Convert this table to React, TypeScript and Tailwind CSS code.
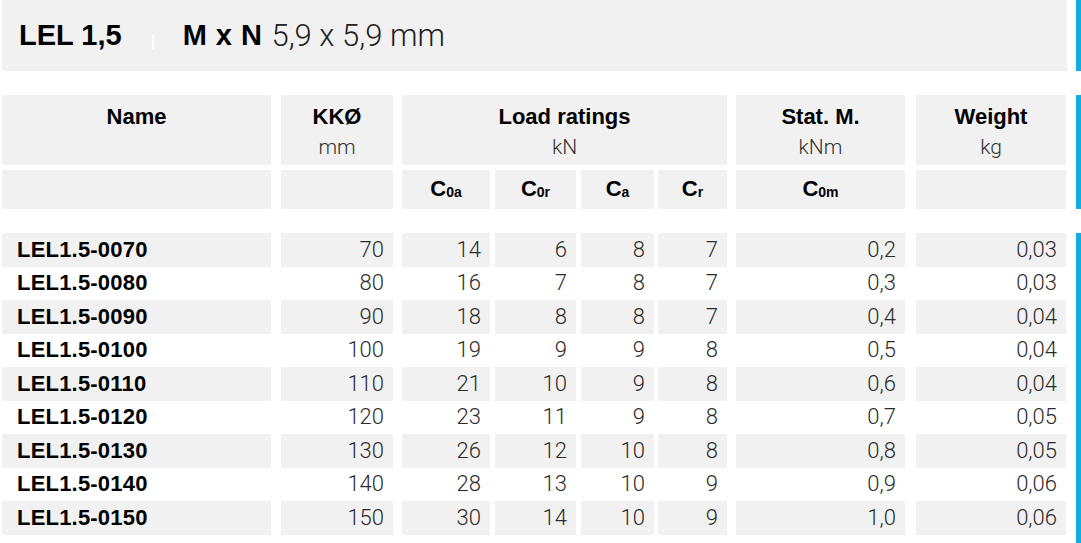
import React from 'react'

/* Spaltenraster: Breite + Abstand links (aus dem Screenshot gemessen) */
const cols = [
  { w: 'w-[269px]', ml: 'ml-[2px]' },
  { w: 'w-[112px]', ml: 'ml-[10px]' },
  { w: 'w-[88px]', ml: 'ml-[9px]' },
  { w: 'w-[81px]', ml: 'ml-[5px]' },
  { w: 'w-[73px]', ml: 'ml-[5px]' },
  { w: 'w-[69px]', ml: 'ml-[4px]' },
  { w: 'w-[169px]', ml: 'ml-[9px]' },
  { w: 'w-[150px]', ml: 'ml-[11px]' },
]

const rows: (string | number)[][] = [
  ['LEL1.5-0070', 70, 14, 6, 8, 7, '0,2', '0,03'],
  ['LEL1.5-0080', 80, 16, 7, 8, 7, '0,3', '0,03'],
  ['LEL1.5-0090', 90, 18, 8, 8, 7, '0,4', '0,04'],
  ['LEL1.5-0100', 100, 19, 9, 9, 8, '0,5', '0,04'],
  ['LEL1.5-0110', 110, 21, 10, 9, 8, '0,6', '0,04'],
  ['LEL1.5-0120', 120, 23, 11, 9, 8, '0,7', '0,05'],
  ['LEL1.5-0130', 130, 26, 12, 10, 8, '0,8', '0,05'],
  ['LEL1.5-0140', 140, 28, 13, 10, 9, '0,9', '0,06'],
  ['LEL1.5-0150', 150, 30, 14, 10, 9, '1,0', '0,06'],
]

const bold = "font-['Liberation_Sans',Arial,sans-serif] font-bold text-black"
const light = "font-['Roboto','Liberation_Sans',sans-serif] font-light"

function HeadCell({ w, ml, title, unit }: { w: string; ml: string; title: string; unit?: string }) {
  return (
    <div className={`${w} ${ml} h-[70px] bg-[#f1f1f1] flex flex-col items-center pt-[7px]`}>
      <span className={`${bold} text-[22px] leading-[30px]`}>{title}</span>
      {unit && <span className={`${light} text-[21px] leading-[30px] text-[#333]`}>{unit}</span>}
    </div>
  )
}

function Sym({ sub }: { sub?: string }) {
  return (
    <span className={`${bold} text-[22px] leading-none`}>
      C
      {sub && <sub className="text-[14px] relative top-[1px] align-baseline">{sub}</sub>}
    </span>
  )
}

export default function App() {
  return (
    <div className="w-[1081px] h-[543px] bg-white overflow-hidden">
      {/* Titelzeile */}
      <div className="flex">
        <div className="ml-[2px] w-[1065px] h-[71px] bg-[#f1f1f1] flex items-center pl-[17px]">
          <span className={`${bold} text-[29px] leading-none`}>LEL 1,5</span>
          <span className="w-[2px] h-[14px] bg-white ml-[30px] mt-[12px]" />
          <span className={`${bold} text-[29px] leading-none ml-[29px] tracking-[0.5px]`}>M x N</span>
          <span className={`${light} text-[31px] leading-none ml-[9px] text-[#222]`}>5,9 x 5,9 mm</span>
        </div>
        <div className="ml-[9px] w-[5px] h-[71px] bg-[#0eaee0] shrink-0" />
      </div>

      {/* Tabellenkopf */}
      <div className="flex mt-[24px]">
        <div>
          <div className="flex">
            <HeadCell w={cols[0].w} ml={cols[0].ml} title="Name" />
            <HeadCell w={cols[1].w} ml={cols[1].ml} title="KKØ" unit="mm" />
            <HeadCell w="w-[325px]" ml={cols[2].ml} title="Load ratings" unit="kN" />
            <HeadCell w={cols[6].w} ml={cols[6].ml} title="Stat. M." unit="kNm" />
            <HeadCell w={cols[7].w} ml={cols[7].ml} title="Weight" unit="kg" />
          </div>
          <div className="flex mt-[5px]">
            {cols.map((c, i) => (
              <div key={i} className={`${c.w} ${c.ml} h-[39px] bg-[#f1f1f1] flex items-center justify-center pb-[1px]`}>
                {i === 2 && <Sym sub="0a" />}
                {i === 3 && <Sym sub="0r" />}
                {i === 4 && <Sym sub="a" />}
                {i === 5 && <Sym sub="r" />}
                {i === 6 && <Sym sub="0m" />}
              </div>
            ))}
          </div>
        </div>
        <div className="ml-[10px] w-[5px] h-[114px] bg-[#0eaee0] shrink-0" />
      </div>

      {/* Datenzeilen */}
      <div className="flex mt-[24px]">
        <div>
          {rows.map((r, ri) => (
            <div key={ri} className="flex">
              {r.map((v, ci) => (
                <div
                  key={ci}
                  className={`${cols[ci].w} ${cols[ci].ml} h-[33.5px] flex items-center ${ri % 2 === 0 ? 'bg-[#f1f1f1]' : ''} ${
                    ci === 0 ? 'pl-[15px]' : 'justify-end pr-[9px]'
                  }`}
                >
                  {ci === 0 ? (
                    <span className={`${bold} text-[22px] leading-none tracking-[0.2px]`}>{v}</span>
                  ) : (
                    <span className={`${light} text-[22px] leading-none text-[#2b2b2b]`}>{v}</span>
                  )}
                </div>
              ))}
            </div>
          ))}
        </div>
        <div className="ml-[10px] w-[5px] h-[320px] bg-[#0eaee0] shrink-0" />
      </div>
    </div>
  )
}
